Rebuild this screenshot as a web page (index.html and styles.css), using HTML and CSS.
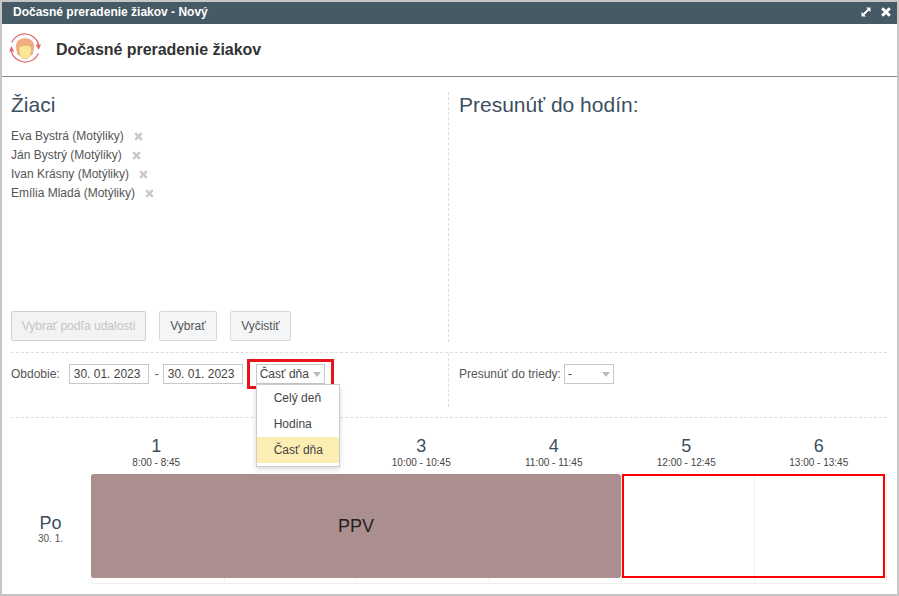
FILE: index.html
```html
<!DOCTYPE html>
<html lang="sk">
<head>
<meta charset="utf-8">
<title>Dočasné preradenie žiakov</title>
<link rel="stylesheet" href="styles.css">
</head>
<body>
<div class="window">
  <div class="titlebar">
    <span class="title-text">Dočasné preradenie žiakov - Nový</span>
    <div class="title-icons">
      <svg width="10" height="10" viewBox="0 0 10 10"><path d="M5 .5H9.500V5L7.900 3.400 3.400 7.900 5 9.500H.5V5L2.100 6.600 6.600 2.100Z" fill="#fff"/></svg>
      <svg width="10" height="10" viewBox="0 0 10 10"><path d="M1.200 1.200L8.800 8.800M8.800 1.200L1.200 8.800" stroke="#fff" stroke-width="3"/></svg>
    </div>
  </div>
  <header class="head">
    <svg class="logo" width="32" height="32" viewBox="0 0 32 32">
      <path d="M2.500 9.500A14.500 14.500 0 0 1 29.800 12" fill="none" stroke="#dc6a6a" stroke-width="1.200"/>
      <path d="M29.500 20.500A14.500 14.500 0 0 1 2.200 18" fill="none" stroke="#dc6a6a" stroke-width="1.200"/>
      <path d="M26.800 11.500H32L29.600 17Z" fill="#dc6a6a"/>
      <path d="M0 18.500H5.200L2.400 13Z" fill="#dc6a6a"/>
      <path d="M7.500 16C6 9.500 10 5.500 16 5.500s10 4 8.500 10.500l-1.500 6H9Z" fill="#f2ac84" stroke="#e79a72" stroke-width=".5"/>
      <path d="M10 16c0-3 2.500-3.500 6-3.500s6.500 .5 6.500 3.500c0 6-2.500 10-6.200 10S10 22 10 16Z" fill="#fbe69a" stroke="#d9bb66" stroke-width=".6"/>
    </svg>
    <h1 class="head-title">Dočasné preradenie žiakov</h1>
  </header>
  <main class="content">
    <section class="top">
      <div class="col col-left">
        <h2 class="col-title">Žiaci</h2>
        <ul class="students">
          <li>Eva Bystrá (Motýliky)<svg class="remove" width="9" height="9" viewBox="0 0 9 9"><path d="M1.200 1.200L7.800 7.800M7.800 1.200L1.200 7.800"/></svg></li>
          <li>Ján Bystrý (Motýliky)<svg class="remove" width="9" height="9" viewBox="0 0 9 9"><path d="M1.200 1.200L7.800 7.800M7.800 1.200L1.200 7.800"/></svg></li>
          <li>Ivan Krásny (Motýliky)<svg class="remove" width="9" height="9" viewBox="0 0 9 9"><path d="M1.200 1.200L7.800 7.800M7.800 1.200L1.200 7.800"/></svg></li>
          <li>Emília Mladá (Motýliky)<svg class="remove" width="9" height="9" viewBox="0 0 9 9"><path d="M1.200 1.200L7.800 7.800M7.800 1.200L1.200 7.800"/></svg></li>
        </ul>
        <div class="buttons">
          <button class="btn btn-disabled" disabled>Vybrať podľa udalosti</button>
          <button class="btn btn-select">Vybrať</button>
          <button class="btn btn-clear">Vyčistiť</button>
        </div>
      </div>
      <div class="col col-right">
        <h2 class="col-title">Presunúť do hodín:</h2>
      </div>
    </section>
    <section class="filters">
      <div class="filter-left">
        <span class="label">Obdobie:</span>
        <span class="input date">30. 01. 2023</span>
        <span class="dash">-</span>
        <span class="input date">30. 01. 2023</span>
        <div class="select-wrap">
          <span class="input select select-part">Časť dňa<i class="caret"></i></span>
          <span class="highlight"></span>
          <ul class="menu">
            <li>Celý deň</li>
            <li>Hodina</li>
            <li class="active">Časť dňa</li>
          </ul>
        </div>
      </div>
      <div class="filter-right">
        <span class="label">Presunúť do triedy:</span>
        <span class="input select select-class">-<i class="caret"></i></span>
      </div>
    </section>
    <section class="timetable">
      <div class="row-head">
        <div class="corner"></div>
        <div class="period"><b>1</b><small>8:00 - 8:45</small></div>
        <div class="period"></div>
        <div class="period"><b>3</b><small>10:00 - 10:45</small></div>
        <div class="period"><b>4</b><small>11:00 - 11:45</small></div>
        <div class="period"><b>5</b><small>12:00 - 12:45</small></div>
        <div class="period"><b>6</b><small>13:00 - 13:45</small></div>
      </div>
      <div class="row-day">
        <div class="day"><b>Po</b><small>30. 1.</small></div>
        <div class="cells">
          <div class="cell"></div><div class="cell"></div><div class="cell"></div>
          <div class="cell"></div><div class="cell"></div><div class="cell"></div>
          <div class="event">PPV</div>
          <div class="target"></div>
        </div>
      </div>
    </section>
  </main>
</div>
</body>
</html>
```

FILE: styles.css
```css
* { box-sizing: border-box; }
html, body { margin: 0; padding: 0; }
body {
  width: 899px;
  height: 596px;
  overflow: hidden;
  background: #fff;
  font-family: "Liberation Sans", Arial, sans-serif;
  color: #444;
}
.window {
  width: 899px;
  height: 596px;
  border: 2px solid #c6c6c6;
  display: flex;
  flex-direction: column;
}
.titlebar {
  height: 22px;
  flex: none;
  background: #455a64;
  color: #fff;
  display: flex;
  align-items: center;
  justify-content: space-between;
  padding: 0 6px 2px 11px;
  font-size: 12px;
  font-weight: bold;
}
.title-icons { display: flex; align-items: center; gap: 10px; margin-bottom: 1px; }
.title-icons svg { display: block; }
.head {
  height: 53px;
  flex: none;
  display: flex;
  align-items: center;
  padding: 0 0 0 7px;
  border-bottom: 1px solid #8a8a8a;
}
.logo { flex: none; margin-bottom: 2px; }
.head-title {
  margin: 0 0 0 15px;
  font-size: 16px;
  font-weight: bold;
  color: #333;
  letter-spacing: -.05px;
}
.content { padding: 0 10px 0 9px; flex: 1; }
.top {
  display: flex;
  height: 276px;
  padding-top: 15px;
  border-bottom: 1px dashed #ddd;
}
.col { height: 250px; }
.col-left {
  width: 438px;
  border-right: 1px dashed #ddd;
  display: flex;
  flex-direction: column;
}
.col-right { padding-left: 10px; flex: 1; }
.col-title {
  margin: 0;
  font-size: 21px;
  font-weight: normal;
  line-height: 26px;
  color: #3d4f5f;
}
.students {
  list-style: none;
  margin: 9px 0 0;
  padding: 0;
  font-size: 12px;
  line-height: 19px;
  color: #555;
}
.remove {
  margin-left: 10px;
  vertical-align: -1px;
  fill: none;
  stroke: #c8c8c8;
  stroke-width: 2.4;
}
.buttons {
  margin-top: auto;
  display: flex;
  gap: 13px;
  padding-bottom: 1px;
}
.btn {
  height: 30px;
  padding: 0;
  font: 12px "Liberation Sans", Arial, sans-serif;
  color: #555;
  background: #f5f6f8;
  border: 1px solid #d8d8d8;
  border-radius: 2px;
}
.btn-disabled { width: 135px; color: #c4c4c4; background: #f3f3f3; border-color: #cfcfcf; }
.btn-select { width: 58px; }
.btn-clear { width: 61px; }
.filters {
  display: flex;
  height: 65px;
  border-bottom: 1px dashed #ddd;
  font-size: 12px;
  color: #555;
}
.filter-left {
  width: 438px;
  height: 54px;
  border-right: 1px dashed #ddd;
  display: flex;
  align-items: flex-start;
  padding-top: 11px;
}
.filter-right {
  display: flex;
  align-items: flex-start;
  padding: 11px 0 0 10px;
}
.label { line-height: 20px; }
.filter-left .label { margin-right: 9px; }
.filter-right .label { margin-right: 3px; }
.input {
  display: block;
  height: 20px;
  line-height: 18px;
  border: 1px solid #c8c8c8;
  color: #444;
  background: #fff;
}
.date { width: 80px; padding-left: 4px; }
.dash { margin: 0 4px 0 6px; line-height: 20px; }
.select { position: relative; padding-left: 3px; }
.select-part { width: 69px; }
.select-class { width: 50px; }
.caret {
  position: absolute;
  right: 3px;
  top: 7px;
  border-left: 4px solid transparent;
  border-right: 4px solid transparent;
  border-top: 5px solid #bbb;
}
.select-wrap { position: relative; margin-left: 13px; }
.highlight {
  position: absolute;
  left: -9px;
  top: -5px;
  width: 87px;
  height: 30px;
  border: 3px solid #e8141c;
}
.menu {
  position: absolute;
  left: 0;
  top: 20px;
  width: 84px;
  margin: 0;
  padding: 0 0 3px;
  list-style: none;
  background: #fff;
  border: 1px solid #ccc;
  box-shadow: 0 2px 5px rgba(0,0,0,.15);
  z-index: 5;
  font-size: 12px;
  color: #444;
}
.menu li { height: 26px; line-height: 26px; padding-left: 17px; }
.menu .active { background: #fcedb3; }
.timetable { display: flex; flex-direction: column; }
.row-head { display: flex; height: 56px; padding: 17px 2px 0 0; }
.corner { width: 79px; flex: none; }
.period { flex: 1; text-align: center; color: #3d4f5f; }
.period b { display: block; font-weight: normal; font-size: 18px; line-height: 22px; }
.period small { display: block; font-size: 10px; line-height: 12px; color: #444; }
.row-day { display: flex; height: 110px; }
.day { width: 80px; flex: none; text-align: center; padding: 39px 1px 0 0; color: #3d4f5f; }
.day b { display: block; font-weight: normal; font-size: 18px; line-height: 20px; }
.day small { display: block; font-size: 10px; line-height: 12px; color: #555; }
.cells {
  position: relative;
  flex: 1;
  display: flex;
  border-left: 1px solid #f0f0f0;
  border-bottom: 1px solid #f0f0f0;
}
.cell { flex: 1; border-right: 1px solid #f0f0f0; }
.event {
  position: absolute;
  left: -1px;
  top: 0;
  width: 530px;
  height: 104px;
  background: #ab8e8e;
  border-radius: 3px;
  color: #222;
  font-size: 18px;
  display: flex;
  align-items: center;
  justify-content: center;
}
.target {
  position: absolute;
  left: 530px;
  top: 0;
  width: 263px;
  height: 104px;
  border: 2px solid #f00;
}
```
